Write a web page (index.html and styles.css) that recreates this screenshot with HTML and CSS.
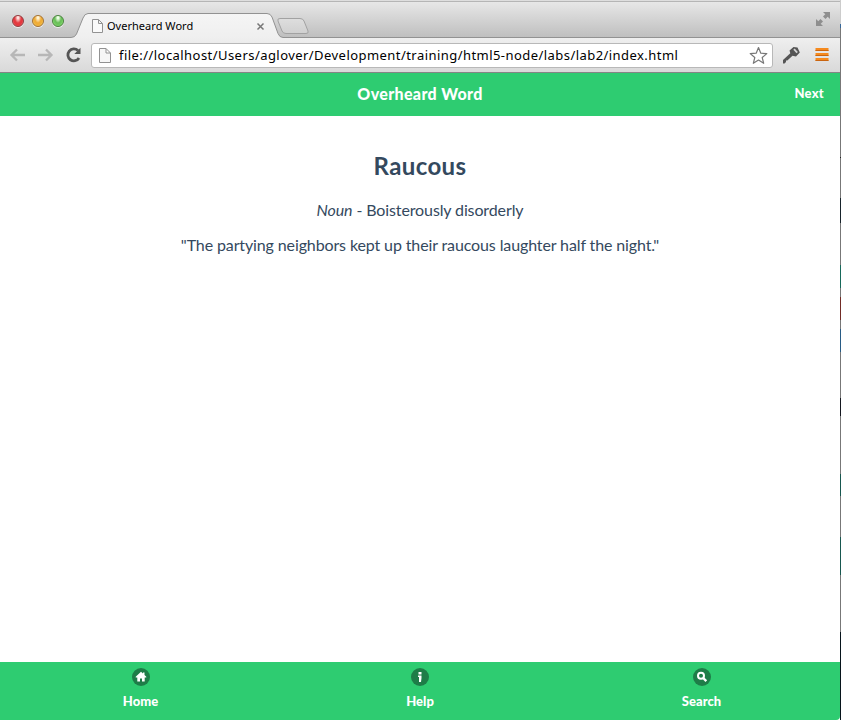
FILE: index.html
```html
<!DOCTYPE html>
<html lang="en">
<head>
<meta charset="utf-8">
<title>Overheard Word</title>
<link rel="stylesheet" href="styles.css">
</head>
<body>
<div class="desktop">
  <div class="window">
    <div class="tabstrip">
      <svg class="tab-shapes" width="840" height="38" viewBox="0 0 840 38">
        <defs>
          <linearGradient id="tab" x2="0" y2="1"><stop stop-color="#f5f5f5"/><stop offset="1" stop-color="#efefef"/></linearGradient>
          <linearGradient id="newtab" x2="0" y2="1"><stop stop-color="#dedede"/><stop offset="1" stop-color="#d0d0d0"/></linearGradient>
        </defs>
        <path d="M0 37.5H71Q75 37.5 76.5 34L83 18Q84.800 13.500 88 13.500H267Q270.500 13.500 272 17L278 33.500Q279.500 37.500 283 37.500H840V39H0Z" fill="url(#tab)" stroke="#929292"/>
        <path d="M280 18.500H300Q303 18.500 304 21L308 31Q309 33.500 306 33.500H286Q283 33.500 282 31L278 21Q277 18.500 280 18.500Z" fill="url(#newtab)" stroke="#a2a2a2"/>
      </svg>
      <div class="lights"><i class="light red"></i><i class="light amber"></i><i class="light lime"></i></div>
      <div class="tab">
        <svg width="12" height="15" viewBox="0 0 12 15"><path d="M1.500 .5H7.500L11.500 4.500V13.500H1.500ZM7.500 .5V4.500H11.500" fill="#fafafa" stroke="#929292"/></svg>
        <span class="tab-title">Overheard Word</span>
        <svg class="close" width="9" height="9" viewBox="0 0 9 9"><path d="M1.500 1.500L7.500 7.500M7.500 1.500L1.500 7.500" stroke="#777" stroke-width="1.500"/></svg>
      </div>
      <svg class="expand" width="16" height="16" viewBox="0 0 16 16"><path d="M8 1H15V8L12.700 5.700L10.500 8L8 5.500L10.300 3.300ZM1 8L3.300 10.300L5.500 8L8 10.500L5.700 12.700L8 15H1Z" fill="#8e8e8e"/></svg>
    </div>
    <div class="toolbar">
      <svg class="nav" width="18" height="16" viewBox="0 0 18 16"><path d="M16 8H3M8 2.500L2.500 8L8 13.500" fill="none" stroke="#b7b7b7" stroke-width="2.300"/></svg>
      <svg class="nav forward" width="18" height="16" viewBox="0 0 18 16"><path d="M1 8H14M9 2.500L14.500 8L9 13.500" fill="none" stroke="#b7b7b7" stroke-width="2.300"/></svg>
      <svg class="reload" width="18" height="18" viewBox="0 0 18 18"><path d="M13 4.500A6 6 0 1 0 14 12" fill="none" stroke="#555" stroke-width="2.800"/><path d="M15.500 1.800V8H9.300Z" fill="#555"/></svg>
      <div class="address">
        <svg width="12" height="15" viewBox="0 0 12 15"><path d="M.5 .5H7L11.500 5V14.500H.5ZM7 .5V5H11.500" fill="#f7f7f7" stroke="#929292"/></svg>
        <span class="url">file://localhost/Users/aglover/Development/training/html5-node/labs/lab2/index.html</span>
        <svg class="star" width="20" height="19" viewBox="0 0 20 19"><path d="M10.500 1.500L12.800 7.200L18.800 7.600L14.200 11.500L15.700 17.300L10.500 14.100L5.300 17.300L6.800 11.500L2.200 7.600L8.200 7.200Z" fill="#fff" stroke="#777" stroke-width="1.200" stroke-linejoin="round"/></svg>
      </div>
      <svg class="key" width="18" height="18" viewBox="0 0 18 18"><path d="M1 14L8.300 7.300L7.500 4.500L11.500 1L15.500 1.500L17.800 6.500L14 10.500L10.500 9.700L5.300 14.500L4 14.500V16L2.500 17.500H1Z" fill="#555"/><path d="M12 3.200L15.200 6.700" stroke="#d4d4d4" stroke-width="1.800"/></svg>
      <svg class="menu" width="14" height="14" viewBox="0 0 14 14"><path d="M.5 0H13.500V3H.5ZM.5 5H13.500V8H.5ZM.5 10H13.500V13H.5Z" fill="#f58a1f"/><path d="M.5 2.500H13.500M.5 7.500H13.500M.5 12.500H13.500" stroke="#c96511"/></svg>
    </div>
    <header class="header"><h1 class="title">Overheard Word</h1><a class="next">Next</a></header>
    <main class="content">
      <h2 class="word">Raucous</h2>
      <p class="definition"><em>Noun</em> - Boisterously disorderly</p>
      <p class="example">"The partying neighbors kept up their raucous laughter half the night."</p>
    </main>
    <footer class="footer">
      <a class="item"><svg width="18" height="18" viewBox="0 0 18 18"><circle cx="9" cy="9" r="9" fill="#1e7d48"/><path d="M9 3.700L3.700 8.800V9.500H5.300V13.500H8V10.500H10V13.500H12.700V9.500H14.300V8.800L12.500 7V4.500H11V5.600Z" fill="#fff"/></svg><span>Home</span></a>
      <a class="item"><svg width="18" height="18" viewBox="0 0 18 18"><circle cx="9" cy="9" r="9" fill="#1e7d48"/><path d="M7.500 4H10.500V6.500H7.500ZM7 7.500H10.500V10L10 14H8V9H7Z" fill="#fff"/></svg><span>Help</span></a>
      <a class="item"><svg width="18" height="18" viewBox="0 0 18 18"><circle cx="9" cy="9" r="9" fill="#1e7d48"/><circle cx="8" cy="7.800" r="3" fill="none" stroke="#fff" stroke-width="2"/><path d="M10.200 10L13.300 13.100" stroke="#fff" stroke-width="2.400"/></svg><span>Search</span></a>
    </footer>
  </div>
  <div class="edge"></div>
</div>
</body>
</html>
```
FILE: styles.css
```css
* { box-sizing: border-box; }
body { margin: 0; background: #fff; font-family: Lato, sans-serif; color: #34495e; overflow: hidden; }
svg { display: block; flex: none; }
.desktop { display: grid; grid-template-columns: 840px 1px; height: 720px; }
.window { display: flex; flex-direction: column; }
.tabstrip { position: relative; display: flex; align-items: flex-start; height: 38px; background: linear-gradient(#dedede 0 1px, #b5b5b5 1px 2px, #e7e7e7 2px, #bfbfbf 37px); font-family: "Noto Sans", sans-serif; }
.tab-shapes { position: absolute; inset: 0; }
.lights { display: flex; gap: 8px; margin: 15px 0 0 12px; position: relative; }
.light { width: 12px; height: 12px; border-radius: 50%; border: 1px solid; box-shadow: 0 1px 0 #eee; }
.red { border-color: #913b3e; background: radial-gradient(ellipse at 50% 15%, #ffe2df 0 10%, #e33e43 45%, #e5353d 65%, #ffa09d); }
.amber { border-color: #a57131; background: radial-gradient(ellipse at 50% 15%, #fff4d5 0 10%, #efaa35 45%, #efb039 65%, #fff08a); }
.lime { border-color: #4a823e; background: radial-gradient(ellipse at 50% 15%, #edffe5 0 10%, #69bd58 45%, #70ca60 65%, #c5ff9d); }
.tab { position: relative; display: flex; align-items: center; width: 175px; height: 15px; margin: 19px 0 0 27px; }
.tab-title { color: #000; font-size: 11px; line-height: 15px; margin: -2px 0 0 4px; white-space: nowrap; letter-spacing: .03px; }
.close { margin-left: auto; margin-right: 1px; }
.expand { position: relative; margin: 11px 9px 0 auto; }
.toolbar { display: flex; align-items: center; height: 35px; padding: 0 11px 0 9px; background: linear-gradient(#efefef, #d9d9d9); border-bottom: 1px solid #858585; }
.forward { margin-left: 10px; }
.reload { margin-left: 10px; }
.address { display: flex; align-items: center; width: 682px; height: 25px; margin-left: 8px; padding: 0 4px 0 7px; background: #fff; border: 1px solid #b8b8b8; border-radius: 3px; }
.url { margin-left: 8px; color: #000; font: 13px/20px "Noto Sans", sans-serif; letter-spacing: .445px; white-space: nowrap; }
.star { margin-left: auto; }
.key { margin-left: 9px; }
.menu { margin-left: auto; }
.header { display: grid; grid-template-columns: 1fr auto 1fr; align-items: center; height: 43px; padding: 0 16px 2px; background: #2ecc71; color: #fff; }
.title { grid-column: 2; margin: 0; font-size: 16px; line-height: 20px; font-weight: 900; letter-spacing: .34px; }
.next { justify-self: end; font-size: 13px; line-height: 18px; font-weight: 900; letter-spacing: .25px; padding-bottom: 2px; }
.content { flex: 1; padding-top: 35px; text-align: center; background: #fff; }
.word { margin: 0; font-size: 24px; line-height: 30px; font-weight: 700; letter-spacing: .4px; }
.definition, .example { margin: 0; font-size: 16px; line-height: 20px; letter-spacing: -.12px; }
.definition { margin-top: 19px; }
.example { margin-top: 15px; }
.footer { display: grid; grid-template-columns: 281px 278px 285px; height: 58px; background: #2ecc71; border-bottom-right-radius: 4px; color: #fff; overflow: hidden; }
.item { display: flex; flex-direction: column; align-items: center; padding-top: 6px; font-size: 13px; line-height: 18px; font-weight: 900; }
.item span { margin-top: 6px; letter-spacing: .05px; }
.edge { background: linear-gradient(#ccc 0 24px, #376799 24px 28px, #777 28px 157px, #222 157px 158px, #777 158px 198px, #17232b 198px 223px, #777 223px 265px, #17695a 265px 288px, #777 288px 297px, #722c26 297px 320px, #777 320px 329px, #285b85 329px 352px, #777 352px 398px, #14171f 398px 416px, #777 416px 474px, #17574f 474px 496px, #777 496px 537px, #17574f 537px 575px, #777 575px 632px, #07141b 632px); }
```
